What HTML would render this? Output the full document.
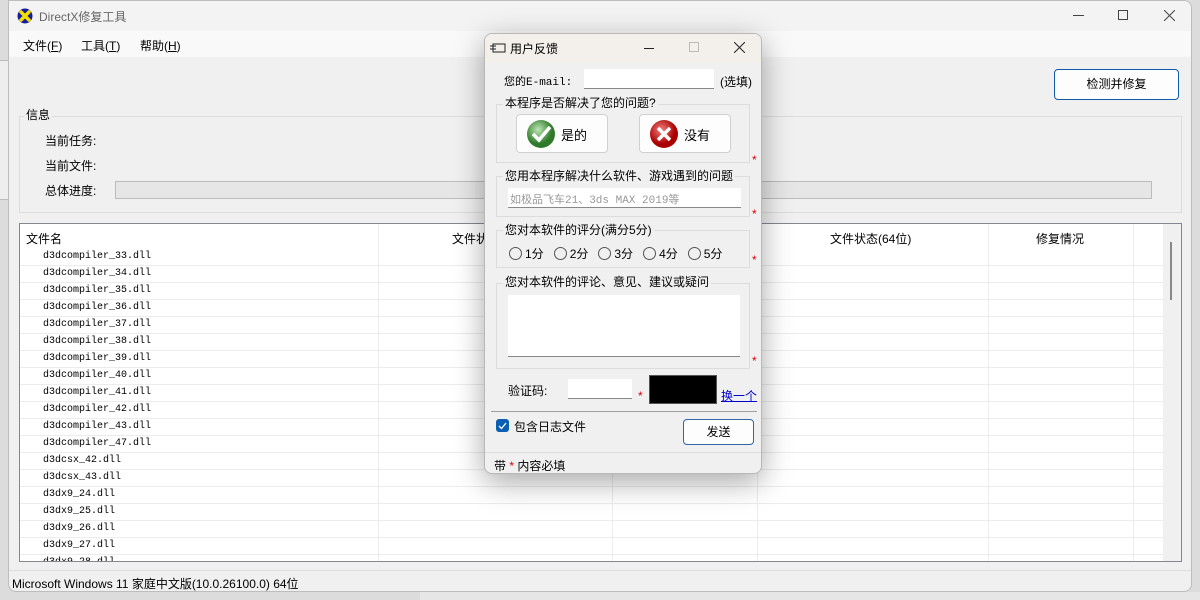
<!DOCTYPE html>
<html><head><meta charset="utf-8"><style>
*{margin:0;padding:0;box-sizing:border-box}
body{width:1200px;height:600px;overflow:hidden;background:#dcdcdc;position:relative;font-family:"Liberation Sans","Noto Sans CJK SC",sans-serif;font-size:12px;color:#000}
.a{position:absolute}
.mono{font-family:"Liberation Mono","Noto Sans CJK SC",monospace;font-size:10px}
#win{left:8px;top:0;width:1184px;height:592px;background:#f0f0f0;border:1px solid #bdbdbd;border-radius:0 8px 8px 8px;overflow:hidden}
.row{position:absolute;left:0;width:1143px;height:17px;border-bottom:1px solid #ececec}
.vl{position:absolute;top:0;width:1px;background:#ececec;height:340px}
#dlg{left:484px;top:33px;width:278px;height:441px;background:#f0f0f0;border:1px solid #b8b8b8;border-radius:8px;box-shadow:0 8px 30px rgba(0,0,0,.35);overflow:hidden}
.grp{position:absolute;border:1px solid #dcdcdc}
.gt{position:absolute;background:#f0f0f0;padding:0 2px;font-size:12px;line-height:14px}
.star{position:absolute;color:#d00;font-size:12px}
.inp{position:absolute;background:#fff;border-bottom:1px solid #888}
.btn{position:absolute;background:#fdfdfd;border:1px solid #d0d0d0;border-radius:4px}
.rad{display:inline-block;width:13px;height:13px;border:1px solid #555;border-radius:50%;vertical-align:-2px;margin-right:3px}
</style></head><body>
<div class="a" style="left:0;top:60px;width:8px;height:140px;border-top:1px solid #bbb;border-bottom:1px solid #bbb;background:#eee"></div>
<div class="a" style="left:420px;top:592px;width:780px;height:8px;background:#e6e6e6"></div>
<div id="win" class="a">
 <div class="a" style="left:0;top:0;width:1184px;height:30px;background:#f3f3f3"></div>
 <svg class="a" style="left:8px;top:7px" width="16" height="16" viewBox="0 0 16 16"><circle cx="8" cy="8" r="7.5" fill="#1a1aa0"/><path d="M4 4L12 12M12 4L4 12" stroke="#f0e000" stroke-width="3.5" stroke-linecap="round"/></svg>
 <div class="a" style="left:30px;top:7px;color:#666;font-size:12px">DirectX修复工具</div>
 <div class="a" style="left:1064px;top:14px;width:11px;height:1px;background:#444"></div>
 <div class="a" style="left:1109px;top:9px;width:10px;height:10px;border:1px solid #444"></div>
 <svg class="a" style="left:1155px;top:9px" width="11" height="11"><path d="M0 0L11 11M11 0L0 11" stroke="#444" stroke-width="1"/></svg>
 <div class="a" style="left:0;top:30px;width:1184px;height:26px;background:#f9f9f9"></div>
 <div class="a" style="left:14px;top:36px;font-size:12px">文件(<u>F</u>)</div>
 <div class="a" style="left:72px;top:36px;font-size:12px">工具(<u>T</u>)</div>
 <div class="a" style="left:131px;top:36px;font-size:12px">帮助(<u>H</u>)</div>
 <div class="btn" style="left:1045px;top:68px;width:125px;height:31px;border:1px solid #0f5aa8;border-radius:4px;text-align:center;line-height:29px">检测并修复</div>
 <div class="grp" style="left:10px;top:115px;width:1163px;height:97px"></div>
 <div class="gt" style="left:15px;top:107px">信息</div>
 <div class="a" style="left:36px;top:131px">当前任务:</div>
 <div class="a" style="left:36px;top:156px">当前文件:</div>
 <div class="a" style="left:36px;top:181px">总体进度:</div>
 <div class="a" style="left:106px;top:180px;width:1037px;height:18px;background:#e6e6e6;border:1px solid #bcbcbc"></div>
 <div class="a" style="left:10px;top:222px;width:1163px;height:339px;background:#fff;border:1px solid #828790;overflow:hidden">
  <div class="a" style="left:0;top:0;width:1143px;height:25px;background:#fff"></div>
  <div class="vl" style="left:358px"></div><div class="vl" style="left:592px"></div><div class="vl" style="left:737px"></div><div class="vl" style="left:968px"></div><div class="vl" style="left:1113px"></div>
  <div class="a" style="left:6px;top:6px;font-size:12px">文件名</div>
  <div class="a" style="left:432px;top:6px;font-size:12px">文件状态(32位)</div>
  <div class="a" style="left:810px;top:6px;font-size:12px">文件状态(64位)</div>
  <div class="a" style="left:1016px;top:6px;font-size:12px">修复情况</div>
  <div class="a" style="left:1143px;top:0;width:19px;height:338px;background:#f0f0f0"></div>
  <div class="a" style="left:1150px;top:18px;width:2px;height:58px;background:#888"></div>
  <div id="rows"></div>
 </div>
 <div class="a" style="left:0;top:569px;width:1184px;height:1px;background:#ddd"></div>
 <div class="a" style="left:3px;top:574px;font-size:12px">Microsoft Windows 11 家庭中文版(10.0.26100.0) 64位</div>
</div>
<div id="dlg" class="a">
 <div class="a" style="left:0;top:0;width:278px;height:29px;background:#f3efea"></div>
 <svg class="a" style="left:5px;top:8px" width="16" height="12"><rect x="3" y="2" width="12" height="8" fill="none" stroke="#222"/><path d="M0 4h6M0 7h6" stroke="#222"/></svg>
 <div class="a" style="left:25px;top:6px">用户反馈</div>
 <div class="a" style="left:159px;top:14px;width:10px;height:1px;background:#222"></div>
 <div class="a" style="left:204px;top:8px;width:10px;height:10px;border:1px solid #bbb"></div>
 <svg class="a" style="left:249px;top:8px" width="11" height="11"><path d="M0 0L11 11M11 0L0 11" stroke="#222"/></svg>
 <div class="a mono" style="left:19px;top:39px;font-size:11px">您的E-mail:</div>
 <div class="inp" style="left:99px;top:35px;width:130px;height:20px"></div>
 <div class="a" style="left:235px;top:39px">(选填)</div>
 <div class="grp" style="left:11px;top:70px;width:254px;height:59px"></div>
 <div class="gt" style="left:18px;top:62px">本程序是否解决了您的问题?</div>
 <div class="btn" style="left:31px;top:80px;width:92px;height:39px"></div>
 <svg class="a" style="left:41px;top:85px" width="30" height="30"><defs><radialGradient id="g1" cx=".4" cy=".35"><stop offset="0" stop-color="#bfe6b5"/><stop offset="1" stop-color="#2e7a2a"/></radialGradient></defs><circle cx="15" cy="15" r="14" fill="url(#g1)"/><path d="M7 15l6 6 11-13" stroke="#fff" stroke-width="3.5" fill="none"/></svg>
 <div class="a" style="left:76px;top:91px;font-size:13px">是的</div>
 <div class="btn" style="left:154px;top:80px;width:92px;height:39px"></div>
 <svg class="a" style="left:164px;top:85px" width="30" height="30"><defs><radialGradient id="g2" cx=".4" cy=".35"><stop offset="0" stop-color="#f08080"/><stop offset="1" stop-color="#a00"/></radialGradient></defs><circle cx="15" cy="15" r="14" fill="url(#g2)"/><path d="M9 9l12 12M21 9L9 21" stroke="#fff" stroke-width="3.5"/></svg>
 <div class="a" style="left:199px;top:91px;font-size:13px">没有</div>
 <div class="star" style="left:267px;top:119px">*</div>
 <div class="grp" style="left:11px;top:142px;width:254px;height:41px"></div>
 <div class="gt" style="left:18px;top:135px">您用本程序解决什么软件、游戏遇到的问题</div>
 <div class="inp mono" style="left:23px;top:154px;width:233px;height:20px;color:#999;padding:3px 2px;font-size:11px">如极品飞车21、3ds MAX 2019等</div>
 <div class="star" style="left:267px;top:173px">*</div>
 <div class="grp" style="left:11px;top:196px;width:254px;height:38px"></div>
 <div class="gt" style="left:18px;top:189px">您对本软件的评分(满分5分)</div>
 <div class="a" style="left:24px;top:211px"><span class="rad"></span>1分&nbsp;&nbsp;&nbsp;<span class="rad"></span>2分&nbsp;&nbsp;&nbsp;<span class="rad"></span>3分&nbsp;&nbsp;&nbsp;<span class="rad"></span>4分&nbsp;&nbsp;&nbsp;<span class="rad"></span>5分</div>
 <div class="star" style="left:267px;top:219px">*</div>
 <div class="grp" style="left:11px;top:249px;width:254px;height:86px"></div>
 <div class="gt" style="left:18px;top:241px">您对本软件的评论、意见、建议或疑问</div>
 <div class="inp" style="left:23px;top:261px;width:232px;height:62px"></div>
 <div class="star" style="left:267px;top:320px">*</div>
 <div class="a" style="left:23px;top:348px">验证码:</div>
 <div class="inp" style="left:83px;top:345px;width:64px;height:20px"></div>
 <div class="star" style="left:153px;top:355px">*</div>
 <div class="a" style="left:164px;top:341px;width:68px;height:29px;background:#000;border:1px solid #555"></div>
 <div class="a" style="left:236px;top:353px;color:#00c;text-decoration:underline">换一个</div>
 <div class="a" style="left:6px;top:377px;width:266px;height:1px;background:#a0a0a0"></div>
 <div class="a" style="left:11px;top:385px;width:13px;height:13px;background:#0a5fb4;border-radius:3px"></div>
 <svg class="a" style="left:13px;top:388px" width="9" height="8"><path d="M1 4l2.5 2.5L8 1" stroke="#fff" stroke-width="1.3" fill="none"/></svg>
 <div class="a" style="left:29px;top:384px">包含日志文件</div>
 <div class="btn" style="left:198px;top:385px;width:71px;height:26px;border:1px solid #2a66a8;text-align:center;line-height:24px">发送</div>
 <div class="a" style="left:0;top:418px;width:278px;height:1px;background:#ddd"></div>
 <div class="a" style="left:9px;top:423px">带 <span style="color:#d00">*</span> 内容必填</div>
</div>
<script>
var n=["d3dcompiler_33.dll","d3dcompiler_34.dll","d3dcompiler_35.dll","d3dcompiler_36.dll","d3dcompiler_37.dll","d3dcompiler_38.dll","d3dcompiler_39.dll","d3dcompiler_40.dll","d3dcompiler_41.dll","d3dcompiler_42.dll","d3dcompiler_43.dll","d3dcompiler_47.dll","d3dcsx_42.dll","d3dcsx_43.dll","d3dx9_24.dll","d3dx9_25.dll","d3dx9_26.dll","d3dx9_27.dll","d3dx9_28.dll"];
var h="";for(var i=0;i<n.length;i++){h+='<div class="row" style="top:'+(25+i*17)+'px"><span class="mono" style="position:absolute;left:23px;top:2px">'+n[i]+'</span></div>';}
document.getElementById("rows").innerHTML=h;
</script>
</body></html>
